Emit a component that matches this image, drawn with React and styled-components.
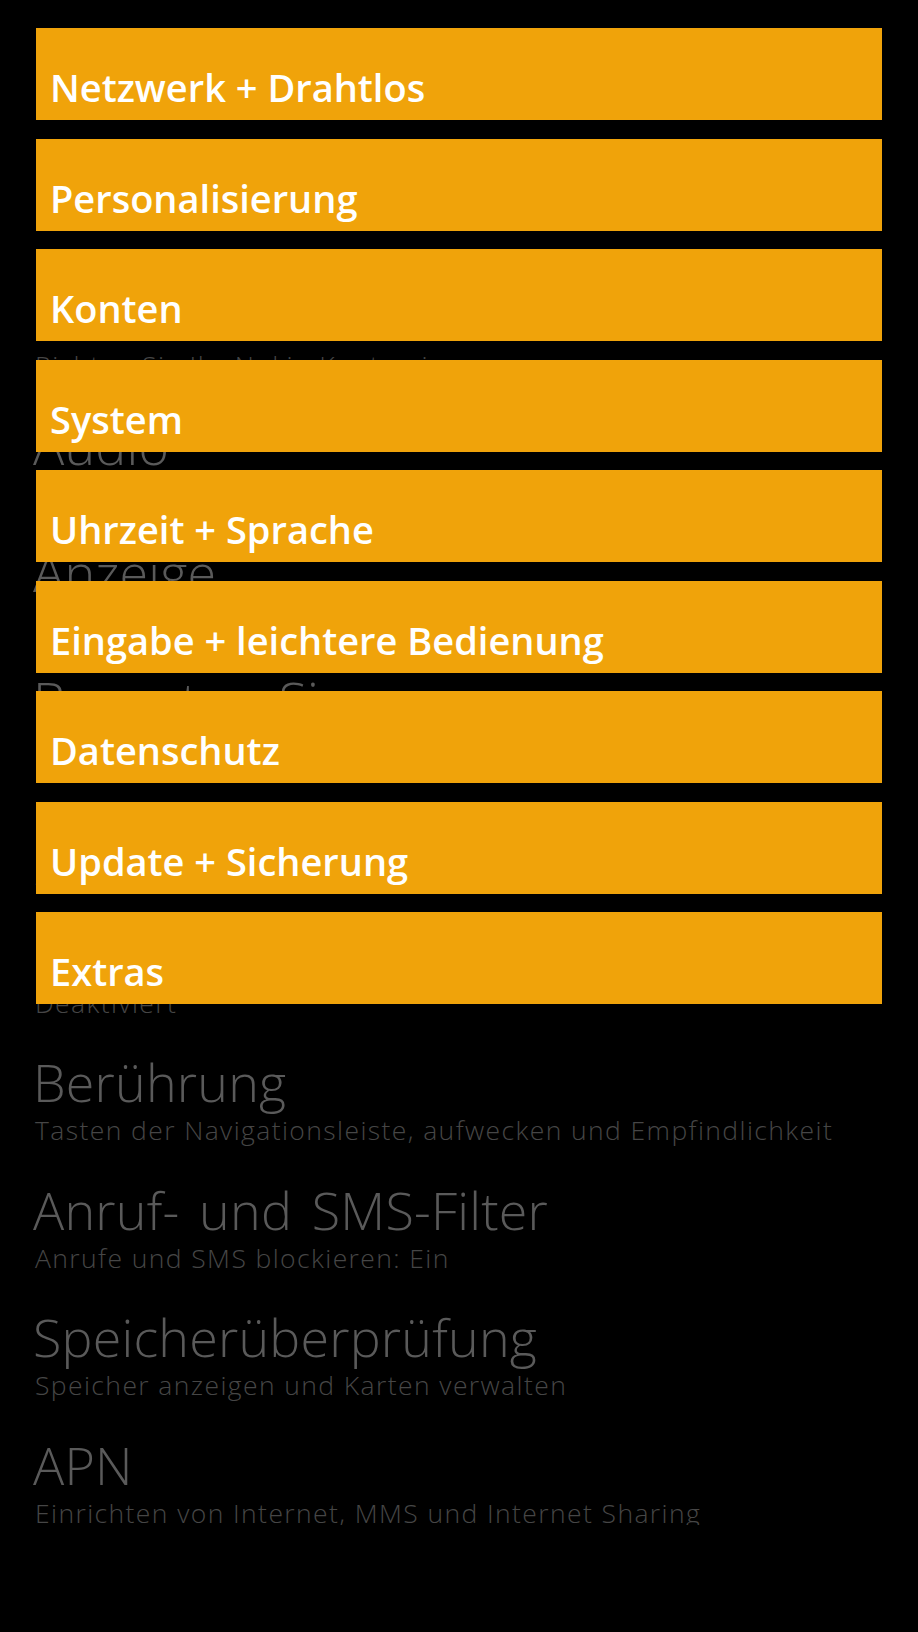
import React from 'react';
import styled, { createGlobalStyle } from 'styled-components';

const GlobalStyle = createGlobalStyle`
  html, body {
    margin: 0;
    padding: 0;
    background: #000;
  }
  body {
    font-family: 'Open Sans', 'Liberation Sans', sans-serif;
  }
`;

const Screen = styled.div`
  position: relative;
  width: 918px;
  height: 1632px;
  background: #000;
  overflow: hidden;
`;

// the settings list that lies dimmed under the menu
const SettingsList = styled.ul`
  list-style: none;
  margin: 0;
  padding: 291px 0 0 33px;
  height: 1525px;
  box-sizing: border-box;
  overflow: hidden;
`;

const Entry = styled.li`
  height: 127.5px;
  white-space: nowrap;
`;

const EntryTitle = styled.div`
  font-size: 52px;
  font-weight: 300;
  line-height: 52px;
  letter-spacing: 0.2px;
  word-spacing: 6px;
  color: #5a5a5a;
`;

const EntryHint = styled.div`
  font-size: 26.5px;
  font-weight: 350;
  line-height: 44px;
  letter-spacing: 1.4px;
  padding-left: 2px;
  color: #464646;
`;

// the orange menu on top
const TileMenu = styled.nav`
  position: absolute;
  top: 28px;
  left: 36px;
  right: 36px;
  display: flex;
  flex-direction: column;
  gap: 18.5px;
`;

const Tile = styled.div`
  height: 92px;
  box-sizing: border-box;
  display: flex;
  align-items: flex-end;
  padding: 0 14px 14px;
  background: #f0a30a;
  color: #fff;
  font-size: 38px;
  font-weight: 600;
  line-height: 38px;
  white-space: nowrap;
`;

const entries = [
  { title: 'Nokia-Konto', hint: 'Richten Sie Ihr Nokia-Konto ein' },
  { title: 'Audio', hint: 'Equalizer und Dolby-Einstellungen' },
  { title: 'Anzeige', hint: 'Helligkeit, Farbprofil und Bildschirm' },
  { title: 'Bewerten Sie uns', hint: 'Ihre Meinung ist uns wichtig' },
  { title: 'Doppeltippen', hint: 'Zum Aktivieren doppeltippen' },
  { title: 'Glance-Bildschirm', hint: 'Deaktiviert' },
  { title: 'Berührung', hint: 'Tasten der Navigationsleiste, aufwecken und Empfindlichkeit' },
  { title: 'Anruf- und SMS-Filter', hint: 'Anrufe und SMS blockieren: Ein' },
  { title: 'Speicherüberprüfung', hint: 'Speicher anzeigen und Karten verwalten' },
  { title: 'APN', hint: 'Einrichten von Internet, MMS und Internet Sharing' },
];

const menu = [
  'Netzwerk + Drahtlos',
  'Personalisierung',
  'Konten',
  'System',
  'Uhrzeit + Sprache',
  'Eingabe + leichtere Bedienung',
  'Datenschutz',
  'Update + Sicherung',
  'Extras',
];

const App = () => {
  return (
    <Screen>
      <GlobalStyle />
      <SettingsList>
        {entries.map((e) => (
          <Entry key={e.title}>
            <EntryTitle>{e.title}</EntryTitle>
            <EntryHint>{e.hint}</EntryHint>
          </Entry>
        ))}
      </SettingsList>
      <TileMenu>
        {menu.map((label) => (
          <Tile key={label}>{label}</Tile>
        ))}
      </TileMenu>
    </Screen>
  );
};

export default App;
